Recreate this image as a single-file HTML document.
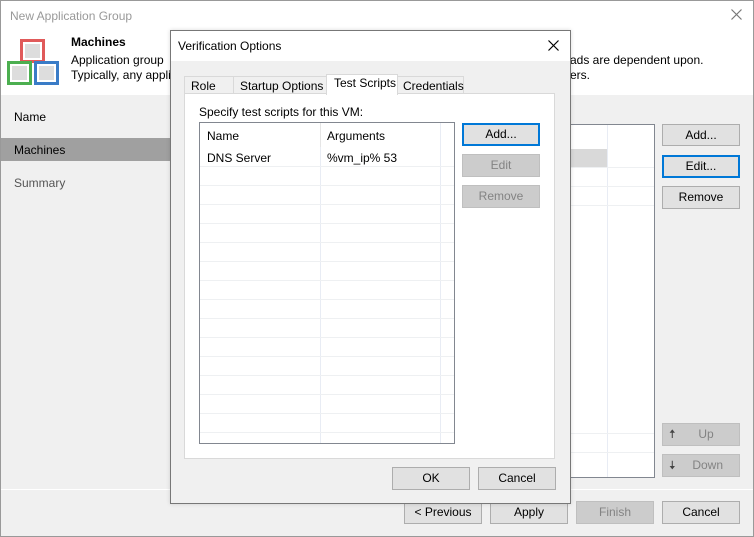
<!DOCTYPE html><html><head><style>
*{box-sizing:border-box;margin:0;padding:0}
body{width:754px;height:537px;position:relative;overflow:hidden;font-family:"Liberation Sans",sans-serif;font-size:12px;color:#000;background:#f0f0f0}
.a{position:absolute}
.btn{position:absolute;background:#e1e1e1;border:1px solid #adadad;text-align:center;line-height:20px;font-size:12px}
.dis{background:#ccc;border-color:#bfbfbf;color:#838383}
.foc{border:2px solid #0078d7;line-height:18px}
.hl{position:absolute;height:1px;background:#eef0f2}
</style></head><body>
<div class="a" style="left:0;top:0;width:754px;height:537px;border:1px solid #999"></div>
<div class="a" style="left:1px;top:1px;width:752px;height:94px;background:#fff"></div>
<div class="a" style="left:10px;top:9px;color:#999;font-size:12px">New Application Group</div>
<svg class="a" style="left:731px;top:9px" width="11" height="11"><path d="M0.5 0.5L10.5 10.5M10.5 0.5L0.5 10.5" stroke="#777" stroke-width="1.2"/></svg>
<div class="a" style="left:20px;top:39px;width:25px;height:24px;border:3px solid #e05a5a;background:#fff"><div style="margin:2px;height:14px;background:#ddd"></div></div>
<div class="a" style="left:7px;top:61px;width:25px;height:24px;border:3px solid #4caf50;background:#fff"><div style="margin:2px;height:14px;background:#ddd"></div></div>
<div class="a" style="left:34px;top:61px;width:25px;height:24px;border:3px solid #3a7cc7;background:#fff"><div style="margin:2px;height:14px;background:#ddd"></div></div>
<div class="a" style="left:71px;top:35px;font-weight:bold">Machines</div>
<div class="a" style="left:71px;top:53px">Application group</div>
<div class="a" style="left:71px;top:68px">Typically, any appli</div>
<div class="a" style="left:570px;top:53px">ads are dependent upon.</div>
<div class="a" style="left:570px;top:68px">ers.</div>
<div class="a" style="left:14px;top:110px">Name</div>
<div class="a" style="left:1px;top:138px;width:169px;height:23px;background:#a0a0a0"></div>
<div class="a" style="left:14px;top:143px">Machines</div>
<div class="a" style="left:14px;top:176px;color:#555">Summary</div>
<div class="a" style="left:555px;top:124px;width:100px;height:354px;background:#fff;border:1px solid #828790"></div>
<div class="a" style="left:555px;top:149px;width:52px;height:18px;background:#d9d9d9"></div>
<div class="a" style="left:607px;top:125px;width:1px;height:352px;background:#e8ecf4"></div>
<div class="hl" style="left:556px;top:167px;width:98px"></div>
<div class="hl" style="left:556px;top:186px;width:98px"></div>
<div class="hl" style="left:556px;top:205px;width:98px"></div>
<div class="hl" style="left:556px;top:433px;width:98px"></div>
<div class="hl" style="left:556px;top:452px;width:98px"></div>
<div class="btn" style="left:662px;top:124px;width:78px;height:22px">Add...</div>
<div class="btn foc" style="left:662px;top:155px;width:78px;height:23px">Edit...</div>
<div class="btn" style="left:662px;top:186px;width:78px;height:23px">Remove</div>
<div class="btn dis" style="left:662px;top:423px;width:78px;height:23px">&nbsp;&nbsp;&nbsp;Up<span style="position:absolute;left:6px;color:#444">🠅</span></div>
<div class="btn dis" style="left:662px;top:454px;width:78px;height:23px">&nbsp;&nbsp;&nbsp;&nbsp;Down<span style="position:absolute;left:6px;color:#444">🠇</span></div>
<div class="a" style="left:1px;top:489px;width:752px;height:1px;background:#fff"></div>
<div class="btn" style="left:404px;top:501px;width:78px;height:23px">&lt; Previous</div>
<div class="btn" style="left:490px;top:501px;width:78px;height:23px">Apply</div>
<div class="btn dis" style="left:576px;top:501px;width:78px;height:23px">Finish</div>
<div class="btn" style="left:662px;top:501px;width:78px;height:23px">Cancel</div>

<div class="a" style="left:170px;top:30px;width:401px;height:474px;background:#f0f0f0;border:1px solid #777;box-shadow:0 0 4px rgba(0,0,0,.15)"></div>
<div class="a" style="left:171px;top:31px;width:399px;height:30px;background:#fff"></div>
<div class="a" style="left:178px;top:39px">Verification Options</div>
<svg class="a" style="left:548px;top:40px" width="11" height="11"><path d="M0.5 0.5L10.5 10.5M10.5 0.5L0.5 10.5" stroke="#000" stroke-width="1.2"/></svg>
<div class="a" style="left:184px;top:93px;width:371px;height:366px;background:#fff;border:1px solid #d9d9d9"></div>
<div class="a" style="left:184px;top:76px;width:50px;height:18px;border:1px solid #d9d9d9;background:#f0f0f0;padding:2px 0 0 6px">Role</div>
<div class="a" style="left:233px;top:76px;width:94px;height:18px;border:1px solid #d9d9d9;background:#f0f0f0;padding:2px 0 0 6px">Startup Options</div>
<div class="a" style="left:326px;top:74px;width:72px;height:21px;border:1px solid #d9d9d9;border-bottom:none;background:#fff;padding:1px 0 0 7px">Test Scripts</div>
<div class="a" style="left:397px;top:76px;width:67px;height:18px;border:1px solid #d9d9d9;background:#f0f0f0;padding:2px 0 0 5px">Credentials</div>
<div class="a" style="left:199px;top:105px">Specify test scripts for this VM:</div>
<div class="a" style="left:199px;top:122px;width:256px;height:322px;border:1px solid #828790;background:#fff"></div>
<div class="a" style="left:320px;top:123px;width:1px;height:320px;background:#e8ecf4"></div>
<div class="a" style="left:440px;top:123px;width:1px;height:320px;background:#e8ecf4"></div>
<div class="a" style="left:320px;top:123px;width:1px;height:24px;background:#e5e5e5"></div>
<div class="a" style="left:207px;top:129px">Name</div>
<div class="a" style="left:327px;top:129px">Arguments</div>
<div class="a" style="left:207px;top:151px">DNS Server</div>
<div class="a" style="left:327px;top:151px">%vm_ip% 53</div>
<div id="rows"></div>
<script>
var h='';for(var y=166;y<440;y+=19){h+='<div class="hl" style="left:200px;top:'+y+'px;width:254px"></div>'}document.getElementById('rows').innerHTML=h;
</script>
<div class="btn foc" style="left:462px;top:123px;width:78px;height:23px">Add...</div>
<div class="btn dis" style="left:462px;top:154px;width:78px;height:23px">Edit</div>
<div class="btn dis" style="left:462px;top:185px;width:78px;height:23px">Remove</div>
<div class="btn" style="left:392px;top:467px;width:78px;height:23px">OK</div>
<div class="btn" style="left:478px;top:467px;width:78px;height:23px">Cancel</div>
</body></html>
